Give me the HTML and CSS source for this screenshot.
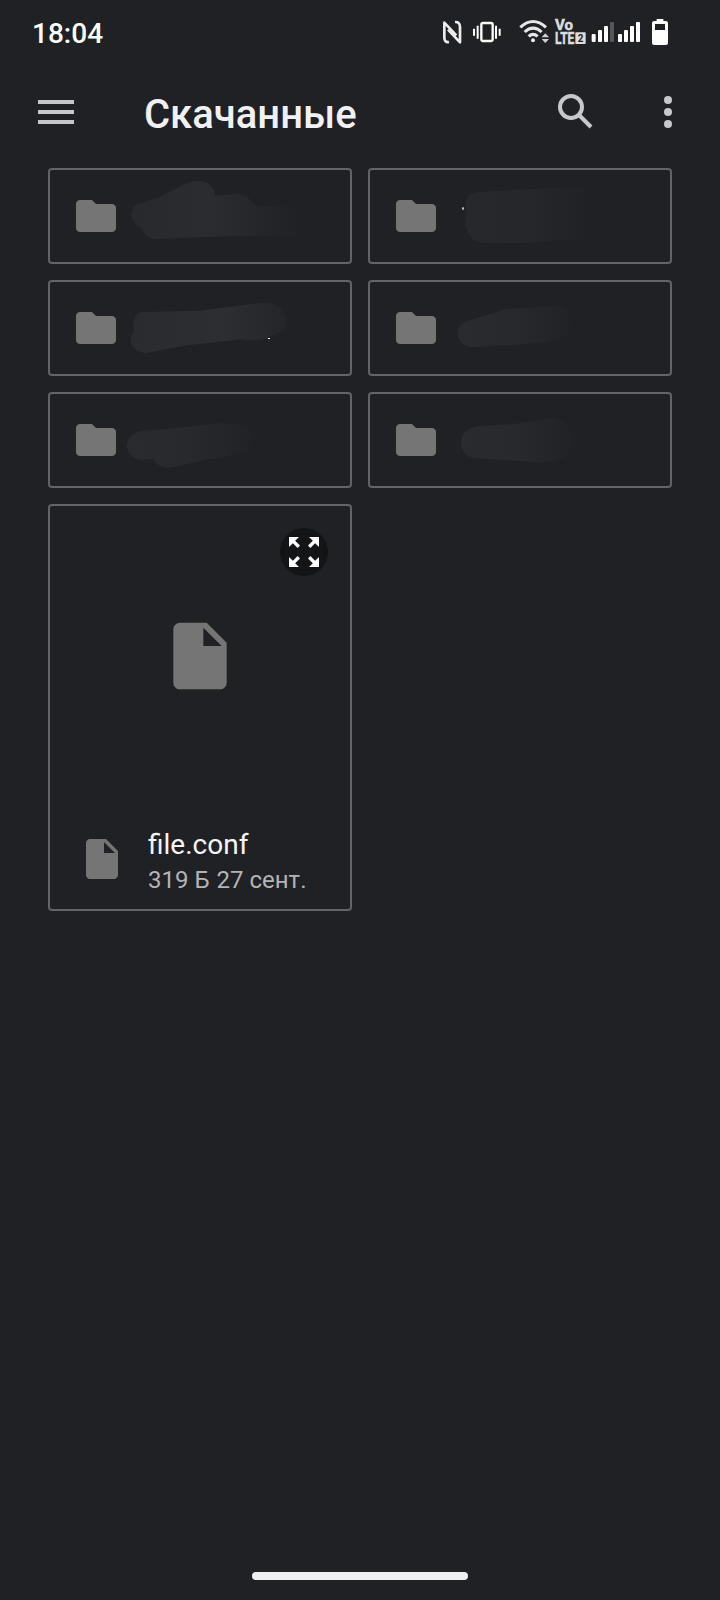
FILE: index.html
```html
<!DOCTYPE html>
<html lang="ru">
<head>
<meta charset="utf-8">
<title>Скачанные</title>
<link rel="stylesheet" href="styles.css">
</head>
<body>
<svg width="0" height="0" class="defs">
  <defs>
    <symbol id="folder" viewBox="0 0 24 24"><path d="M10 4H4c-1.100 0-1.990.9-1.990 2L2 18c0 1.100.9 2 2 2h16c1.100 0 2-.9 2-2V8c0-1.100-.9-2-2-2h-8z"/></symbol>
    <symbol id="file" viewBox="0 0 24 24"><path fill-rule="evenodd" d="M6 2c-1.100 0-2 .9-2 2v16c0 1.100.9 2 2 2h12c1.100 0 2-.9 2-2V8l-6-6H6zm7 7V3.500L18.500 9H13z"/></symbol>
    <linearGradient id="fade"><stop offset="0" stop-color="#28292c"/><stop offset=".45" stop-color="#2b2c2f"/><stop offset="1" stop-color="#202124"/></linearGradient>
    <linearGradient id="fade-soft"><stop offset="0" stop-color="#27282b"/><stop offset=".5" stop-color="#26272a"/><stop offset="1" stop-color="#202124"/></linearGradient>
    <linearGradient id="fade-long"><stop offset="0" stop-color="#2a2b2e"/><stop offset=".6" stop-color="#2d2e31"/><stop offset="1" stop-color="#242528"/></linearGradient>
    <linearGradient id="fade-short"><stop offset="0" stop-color="#2a2b2e"/><stop offset=".5" stop-color="#28292c"/><stop offset="1" stop-color="#212225"/></linearGradient>
  </defs>
</svg>
<div class="screen">
  <header class="status">
    <span class="time">18:04</span>
    <div class="indicators">
      <svg class="nfc" viewBox="36 48 60 96" fill="none" stroke="#ececee" stroke-width="8" stroke-linejoin="round"><path d="M57 126Q43 128 43 113V68L79 106"/><path d="M75 66Q90 65 90 81V127L54 89"/></svg>
      <svg class="vibrate" viewBox="126 48 90 96"><rect x="154" y="69" width="34" height="54" rx="5" fill="none" stroke="#fff" stroke-width="7"/><path d="M132 86v21M143 77v39M198 77v39M209 86v21" stroke="#fff" stroke-width="6"/></svg>
      <svg class="wifi" viewBox="264 48 96 96"><g fill="none" stroke="#e6e7e9" stroke-width="9"><path d="M271 82Q309 47 348 82"/><path d="M284 96Q309 73 335 96"/><path d="M296 109Q309 97 323 109"/></g><circle cx="309" cy="121" r="6" fill="#e6e7e9"/><path d="M335 112l11-12 11 12zM335 117h22l-11 12z" fill="#d0d1d3"/></svg>
      <svg class="volte" viewBox="372 48 96 96" fill="#dcdddf"><text x="375" y="91" font-size="45" textLength="54" lengthAdjust="spacingAndGlyphs" stroke="#dcdddf" stroke-width="1.500">Vo</text><text x="375" y="131" font-size="48" textLength="58" lengthAdjust="spacingAndGlyphs" stroke="#dcdddf" stroke-width="1.500">LTE</text><rect x="436" y="97" width="31" height="35" rx="2"/><text x="443" y="125" font-size="30" textLength="17" lengthAdjust="spacingAndGlyphs" fill="#202124">2</text></svg>
      <svg class="signal" viewBox="483 48 72 96" fill="#fff"><rect x="485" y="102" width="12" height="24" rx="3"/><rect x="504" y="90" width="12" height="36" rx="3"/><rect x="522" y="78" width="12" height="48" rx="3"/><rect x="540" y="66" width="12" height="60" rx="3" fill="#55565a"/></svg>
      <svg class="signal signal-two" viewBox="561 48 72 96" fill="#fff"><rect x="564" y="102" width="12" height="24" rx="3"/><rect x="582" y="90" width="12" height="36" rx="3"/><rect x="600" y="78" width="12" height="48" rx="3"/><rect x="618" y="66" width="12" height="60" rx="3"/></svg>
      <svg class="battery" viewBox="663 48 54 96"><path fill="#fff" fill-rule="evenodd" d="M680 57h20v6h8q6 0 6 6v60q0 6-6 6h-36q-6 0-6-6V69q0-6 6-6h8zM675 72v18h30V72z"/></svg>
    </div>
  </header>

  <div class="toolbar">
    <svg class="menu" viewBox="0 0 36 24" fill="#c4c6cc"><path d="M0 0h36v4H0zM0 10h36v4H0zM0 20h36v4H0z"/></svg>
    <h1 class="title">Скачанные</h1>
    <svg class="search" viewBox="0 0 48 48" fill="none" stroke="#c6c8ce" stroke-width="4"><circle cx="19" cy="19" r="11"/><path d="M27.500 27.500L39 39"/></svg>
    <svg class="more" viewBox="0 0 8 32" fill="#c6c8ce"><circle cx="4" cy="4" r="4"/><circle cx="4" cy="16" r="4"/><circle cx="4" cy="28" r="4"/></svg>
  </div>

  <main class="grid">
    <div class="card folder">
      <svg class="icon"><use href="#folder"/></svg>
      <svg class="name" viewBox="240 30 690 276"><path fill="url(#fade)" d="M300 130Q325 124 360 110L440 70Q485 54 512 76Q524 88 524 107L590 101Q622 102 636 128Q645 138 670 138L790 142V226L560 229L345 237Q315 234 302 203Q274 190 273 162Q278 136 300 130Z"/></svg>
    </div>
    <div class="card folder">
      <svg class="icon"><use href="#folder"/></svg>
      <svg class="name" viewBox="240 30 690 276"><path fill="url(#fade-soft)" d="M317 125Q320 98 360 96L520 86L700 82V230L610 240L480 250L370 248Q335 245 325 218Q308 180 320 155Z"/><rect x="306" y="142" width="6" height="7" fill="#b8b8ba"/></svg>
    </div>
    <div class="card folder">
      <svg class="icon"><use href="#folder"/></svg>
      <svg class="name" viewBox="240 36 690 276"><path fill="url(#fade-long)" d="M280 160Q283 126 315 126L480 122L660 99Q705 93 730 125Q752 160 728 182L690 199Q670 216 600 208L430 227L320 249Q280 248 272 214Q271 197 281 185Z"/><rect x="684" y="204" width="6" height="3" fill="#eee"/></svg>
    </div>
    <div class="card folder">
      <svg class="icon"><use href="#folder"/></svg>
      <svg class="name" viewBox="240 36 690 276"><path fill="url(#fade-short)" d="M293 190Q292 165 320 153L440 117L600 108Q632 118 632 155Q638 190 600 207Q550 222 420 226L335 232Q295 225 293 190Z"/></svg>
    </div>
    <div class="card folder">
      <svg class="icon"><use href="#folder"/></svg>
      <svg class="name" viewBox="240 27 690 276"><path fill="url(#fade-short)" d="M260 180Q266 144 305 138L400 130L540 114L615 121Q642 140 636 175Q622 201 580 204Q560 222 510 222L385 249Q350 245 340 222L305 225Q264 220 260 180Z"/></svg>
    </div>
    <div class="card folder">
      <svg class="icon"><use href="#folder"/></svg>
      <svg class="name" viewBox="240 372 690 276"><path fill="url(#fade-short)" d="M302 520Q306 476 355 469L470 461L580 445Q622 452 636 490Q648 535 615 562Q590 578 530 577L340 564Q304 552 302 520Z"/></svg>
    </div>
    <div class="card file">
      <div class="preview">
        <svg class="preview-icon"><use href="#file"/></svg>
        <div class="expand"><svg viewBox="0 0 24 24" fill="#fff"><path d="M15 3l2.300 2.300-2.890 2.870 1.420 1.420L18.700 6.700 21 9V3zM3 9l2.300-2.300 2.870 2.890 1.420-1.420L6.700 5.300 9 3H3zM9 21l-2.300-2.300 2.890-2.870-1.420-1.420L5.300 17.300 3 15v6zM21 15l-2.300 2.300-2.870-2.890-1.420 1.420 2.890 2.870L15 21h6z"/></svg></div>
      </div>
      <div class="details">
        <svg class="icon"><use href="#file"/></svg>
        <div class="labels">
          <div class="filename">file.conf</div>
          <div class="meta"><span>319 Б</span><span>27 сент.</span></div>
        </div>
      </div>
    </div>
  </main>
  <div class="home-bar"></div>
</div>
</body>
</html>
```

FILE: styles.css
```css
* { box-sizing: border-box; }
body {
  margin: 0;
  background: #202124;
  color: #fff;
  font-family: Roboto, "Liberation Sans", sans-serif;
}
svg { display: block; flex: none; }
.defs { position: absolute; }
.screen {
  width: 720px;
  height: 1600px;
  display: flex;
  flex-direction: column;
}
.status {
  height: 64px;
  padding: 0 51px 0 32px;
  display: flex;
  justify-content: space-between;
  align-items: center;
}
.time { font-size: 28px; font-weight: 500; line-height: 32px; padding-top: 3px; }
.indicators { display: flex; }
.indicators svg { height: 32px; }
.nfc { width: 20px; }
.vibrate { width: 30px; margin-left: 10px; }
.wifi { width: 32px; margin-left: 16px; }
.volte { width: 32px; margin-left: 4px; font-family: Roboto, sans-serif; font-weight: 700; }
.signal { width: 24px; margin-left: 5px; }
.signal-two { margin-left: 2px; }
.battery { width: 18px; margin-left: 10px; }

.toolbar {
  height: 96px;
  padding: 0 48px 0 38px;
  display: flex;
  align-items: center;
}
.menu { width: 36px; height: 24px; }
.title {
  flex: 1;
  margin: 6px 0 0 70px;
  font-size: 40px;
  line-height: 48px;
  font-weight: 500;
  color: #f1f0f7;
}
.search { width: 48px; height: 48px; }
.more { width: 8px; height: 32px; margin-left: 64px; }

.grid {
  padding: 8px 48px 0;
  display: grid;
  grid-template-columns: 304px 304px;
  gap: 16px;
}
.card { border: 2px solid #626467; border-radius: 4px; }
.folder {
  height: 96px;
  padding-left: 22px;
  display: flex;
  align-items: center;
  overflow: hidden;
}
.icon { width: 48px; height: 48px; fill: #757575; }
.name { width: 230px; height: 92px; }

.file { height: 407px; }
.preview {
  position: relative;
  height: 300px;
  display: flex;
  align-items: center;
  justify-content: center;
}
.preview-icon { width: 80px; height: 80px; fill: #757575; }
.expand {
  position: absolute;
  top: 22px;
  right: 22px;
  width: 48px;
  height: 48px;
  padding: 4px;
  border-radius: 50%;
  background: #131416;
}
.details {
  height: 103px;
  padding: 3px 0 0 28px;
  display: flex;
  align-items: center;
}
.labels { margin-left: 22px; padding-top: 6px; }
.filename { font-size: 28px; line-height: 35px; color: #f5f4fa; }
.meta { display: flex; gap: 7px; padding-top: 2px; font-size: 24px; line-height: 33px; color: #b3b3b8; }

.home-bar {
  width: 216px;
  height: 8px;
  margin: auto auto 20px;
  border-radius: 4px;
  background: #eceeef;
}
```
